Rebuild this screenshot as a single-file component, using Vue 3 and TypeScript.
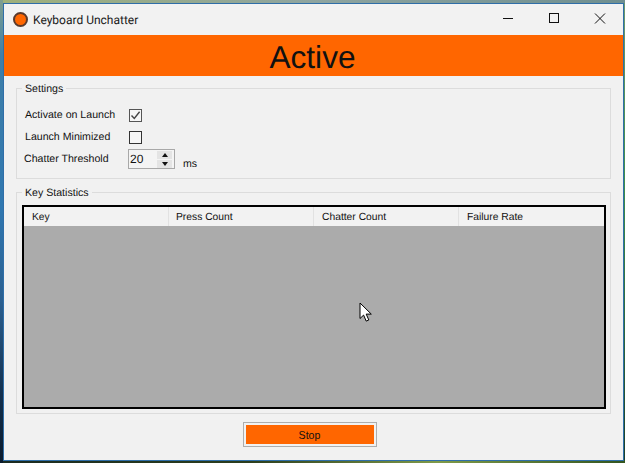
<script setup lang="ts">
const columns: string[] = ['Key', 'Press Count', 'Chatter Count', 'Failure Rate']
</script>

<template>
  <div class="desktop">
    <div class="window">
      <header class="titlebar">
        <span class="app-icon"></span>
        <span class="title">Keyboard Unchatter</span>
        <div class="controls">
          <svg width="46" height="31" viewBox="0 0 46 31">
            <path d="M18 14.5h10" stroke="#111" fill="none" />
          </svg>
          <svg width="46" height="31" viewBox="0 0 46 31">
            <rect x="18.5" y="9.5" width="9" height="9" stroke="#111" fill="none" />
          </svg>
          <svg width="46" height="31" viewBox="0 0 46 31">
            <path d="M18 9.5l10 10M28 9.5l-10 10" stroke="#111" fill="none" />
          </svg>
        </div>
      </header>

      <div class="status">Active</div>

      <fieldset class="group settings">
        <legend>Settings</legend>
        <div class="row">
          <label>Activate on Launch</label>
          <span class="check checked">
            <svg width="11" height="11" viewBox="0 0 11 11">
              <path d="M1.5 5.5l2.8 3L9.6 1.8" stroke="#444" stroke-width="1.4" fill="none" />
            </svg>
          </span>
        </div>
        <div class="row">
          <label>Launch Minimized</label>
          <span class="check"></span>
        </div>
        <div class="row threshold">
          <label>Chatter Threshold</label>
          <div class="spinner">
            <span class="value">20</span>
            <div class="spin-btns">
              <span class="spin-btn"><i class="arrow up"></i></span>
              <span class="spin-btn"><i class="arrow down"></i></span>
            </div>
          </div>
          <span class="unit">ms</span>
        </div>
      </fieldset>

      <fieldset class="group stats">
        <legend>Key Statistics</legend>
        <div class="list">
          <div class="list-head">
            <div v-for="col in columns" :key="col" class="col">{{ col }}</div>
          </div>
          <div class="list-body">
            <svg class="cursor" width="14" height="21" viewBox="0 0 14 21">
              <path
                d="M1 1v15.5l3.6-3.4 2.6 6 2.6-1.1-2.6-5.9h5.1z"
                fill="#fff"
                stroke="#000"
                stroke-width="1"
              />
            </svg>
          </div>
        </div>
      </fieldset>

      <div class="footer">
        <button class="stop">Stop</button>
      </div>
    </div>
  </div>
</template>

<style>
body {
  margin: 0;
  background: #2c5a86;
}
</style>

<style scoped>
.desktop {
  width: 625px;
  height: 463px;
  box-sizing: border-box;
  padding: 3px 1px 2px 3px;
  overflow: hidden;
  background:
    linear-gradient(to bottom, #7f9f8f 0, #3f7fa8 12%, #2f77b0 45%, #2a5f90 65%, #12304f 85%, #0a1a2c 100%) left top / 3px 100% no-repeat,
    linear-gradient(to right, #1a2a20, #2b3d1c 40%, #7f9a48 70%, #33551f) left bottom / 100% 3px no-repeat,
    linear-gradient(to right, #9fb07a, #8fa5a0 50%, #6f8f90) left top / 100% 3px no-repeat,
    linear-gradient(to bottom, #6f9a6f, #3f8f4c 40%, #2d6a3f 70%, #1a3f2a) right top / 2px 100% no-repeat,
    #10243a;
  font-family: "Liberation Sans", Arial, sans-serif;
  font-size: 10.6px;
  text-rendering: geometricPrecision;
  color: #111;
}

.window {
  height: 100%;
  box-sizing: border-box;
  border: 1px solid #2f6ea8;
  background: #f1f1f1;
  display: flex;
  flex-direction: column;
  position: relative;
}

.titlebar {
  height: 31px;
  flex: none;
  display: flex;
  align-items: center;
  padding-left: 9px;
  background: #f2f2f2;
}

.app-icon {
  width: 11px;
  height: 11px;
  border-radius: 50%;
  background: #ff6600;
  border: 2px solid #5a3a2c;
}

.title {
  margin-left: 5px;
  font-family: Roboto, sans-serif;
  font-size: 12px;
  color: #1a1a1a;
}

.controls {
  margin-left: auto;
  display: flex;
}

.controls svg {
  display: block;
}

.status {
  height: 41px;
  flex: none;
  background: #ff6600;
  color: #111;
  text-align: center;
  font-size: 31.6px;
  line-height: 44px;
  padding-right: 2px;
}

.group {
  margin: 0 12px;
  padding: 0;
  min-width: 0;
  border: 1px solid #dcdcdc;
  box-sizing: border-box;
}

.group legend {
  padding: 0 3px;
  line-height: 15px;
  height: 13px;
}

.settings {
  margin-top: 6px;
  height: 97px;
  padding: 9px 0 0 8px;
}

.settings legend {
  margin-left: -3px;
}

.row {
  display: flex;
  align-items: center;
  height: 22px;
}

.row label {
  width: 104px;
  flex: none;
}

.check {
  width: 13px;
  height: 13px;
  box-sizing: border-box;
  border: 1px solid #333;
  background: #f6f6f6;
  display: flex;
  align-items: center;
  justify-content: center;
}

.check.checked {
  border-color: #555;
}

.threshold label {
  margin-left: -1px;
}

.spinner {
  width: 47px;
  height: 20px;
  box-sizing: border-box;
  border: 1px solid #a8a8a8;
  background: #f4f4f4;
  display: flex;
  align-items: center;
  justify-content: space-between;
  padding: 1px;
  font-size: 12px;
}

.spin-btns {
  width: 15px;
  margin-right: 1px;
  display: flex;
  flex-direction: column;
  gap: 1px;
}

.spin-btn {
  height: 8px;
  background: #e4e4e4;
  display: flex;
  align-items: center;
  justify-content: center;
}

.arrow {
  width: 0;
  height: 0;
  border-left: 3px solid transparent;
  border-right: 3px solid transparent;
}

.arrow.up {
  border-bottom: 4px solid #111;
}

.arrow.down {
  border-top: 4px solid #111;
}

.unit {
  margin: 10px 0 0 8px;
}

.stats {
  margin-top: 7px;
  height: 228px;
  padding: 6px 4px 3px 5px;
}

.stats legend {
  margin-left: 0;
}

.list {
  height: 204px;
  box-sizing: border-box;
  border: 2px solid #000;
  background: #ababab;
  display: flex;
  flex-direction: column;
}

.list-head {
  height: 19px;
  flex: none;
  display: grid;
  grid-template-columns: repeat(4, 145px);
  background: #f2f2f2;
  font-size: 10.3px;
}

.col {
  padding: 5px 0 0 8px;
  border-right: 1px solid #e2e2e2;
}

.col:nth-child(2) {
  padding-left: 7px;
}

.col:last-child {
  border-right: 0;
}

.list-body {
  flex: 1;
  position: relative;
}

.cursor {
  position: absolute;
  left: 335px;
  top: 76px;
}

.footer {
  flex: 1;
  display: flex;
  justify-content: center;
  padding: 8px 8px 0 0;
}

.stop {
  width: 134px;
  height: 25px;
  box-sizing: border-box;
  padding: 0;
  border: 1px solid #adadad;
  outline: 2px solid #f1f1f1;
  outline-offset: -3px;
  background: #ff6600;
  font-family: inherit;
  font-size: 10.6px;
  color: #111;
}
</style>
